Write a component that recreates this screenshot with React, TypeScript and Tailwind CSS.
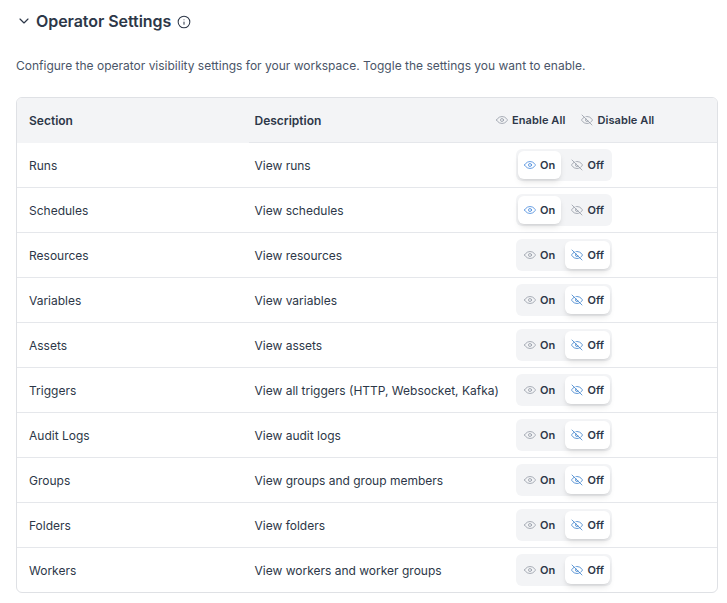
import { ChevronDown, Info } from 'lucide-react';

const rows: [string, string, boolean][] = [
  ['Runs', 'View runs', true],
  ['Schedules', 'View schedules', true],
  ['Resources', 'View resources', false],
  ['Variables', 'View variables', false],
  ['Assets', 'View assets', false],
  ['Triggers', 'View all triggers (HTTP, Websocket, Kafka)', false],
  ['Audit Logs', 'View audit logs', false],
  ['Groups', 'View groups and group members', false],
  ['Folders', 'View folders', false],
  ['Workers', 'View workers and worker groups', false],
];

function EyeIcon({ off = false, className = '' }: { off?: boolean; className?: string }) {
  return (
    <svg
      viewBox="0 0 24 24"
      fill="none"
      stroke="currentColor"
      strokeWidth="1.5"
      strokeLinecap="round"
      strokeLinejoin="round"
      className={`size-3 shrink-0 ${className}`}
    >
      {off ? (
        <>
          <path d="M9.88 9.88a3 3 0 1 0 4.24 4.24" />
          <path d="M10 5.1A12 12 0 0 1 12 5c7.5 0 11 7 11 7a16 16 0 0 1-3.6 4.4" />
          <path d="M6 6.6C2.7 8.8 1 12 1 12s3.5 7 11 7a11 11 0 0 0 5.8-1.6" />
          <path d="M2 2l20 20" />
        </>
      ) : (
        <>
          <path d="M1 12s3.5-7 11-7 11 7 11 7-3.5 7-11 7-11-7-11-7Z" />
          <circle cx="12" cy="12" r="3" />
        </>
      )}
    </svg>
  );
}

const active = 'bg-white shadow-md';

function Toggle({ on }: { on: boolean }) {
  return (
    <div className="flex h-8 w-24 items-center rounded-md bg-[#f3f4f6] py-px pl-[1.5px] pr-px text-[11px] font-semibold text-[#2d3748]">
      <div className={`flex h-7 w-[43.5px] items-center gap-1 rounded-md pl-[6.5px] ${on ? active : ''}`}>
        <EyeIcon className={on ? 'text-[#3b82d9]' : 'text-[#8f96a1]'} />
        On
      </div>
      <div className={`ml-1 flex h-7 w-[45px] items-center gap-[4.5px] rounded-md pl-[6px] ${on ? '' : active}`}>
        <EyeIcon off className={on ? 'text-[#8f96a1]' : 'text-[#2f78c8]'} />
        Off
      </div>
    </div>
  );
}

export default function App() {
  return (
    <div className="h-[603px] bg-white pl-4 pr-[9px] font-['Inter',sans-serif] text-xs text-[#2d3748]">
      <div className="flex h-[42px] items-center">
        <ChevronDown size={16} strokeWidth={1.75} />
        <h1 className="ml-1 text-base font-semibold tracking-[-0.06px]">Operator Settings</h1>
        <Info size={14} strokeWidth={1.75} className="ml-1.5 mt-px" />
      </div>
      <p className="mt-[15px] h-10 leading-[18px] text-[#4a5568]">
        Configure the operator visibility settings for your workspace. Toggle the settings you want to enable.
      </p>
      <div className="overflow-hidden rounded-md border border-[#dfe1e5]">
        <div className="grid h-[45px] grid-cols-[232px_1fr] bg-[#f3f4f6] font-semibold">
          <div className="flex items-center pl-3">Section</div>
          <div className="grid grid-cols-[247px_1fr] items-center border-b border-[#e5e7eb]">
            <div className="pl-[5.5px] pt-px">Description</div>
            <div className="flex items-center text-[11px] tracking-[0.09px]">
              <EyeIcon className="mr-1 text-[#8f96a1]" />
              Enable All
              <EyeIcon off className="ml-4 mr-1 text-[#8f96a1]" />
              Disable All
            </div>
          </div>
        </div>
        {rows.map(([section, description, on]) => (
          <div key={section} className="grid h-[45px] grid-cols-[237.5px_261.5px_1fr] items-center border-b border-[#e5e7eb] last:h-11 last:border-b-0">
            <div className="pl-3 pt-px">{section}</div>
            <div className="pt-px">{description}</div>
            <Toggle on={on} />
          </div>
        ))}
      </div>
    </div>
  );
}
